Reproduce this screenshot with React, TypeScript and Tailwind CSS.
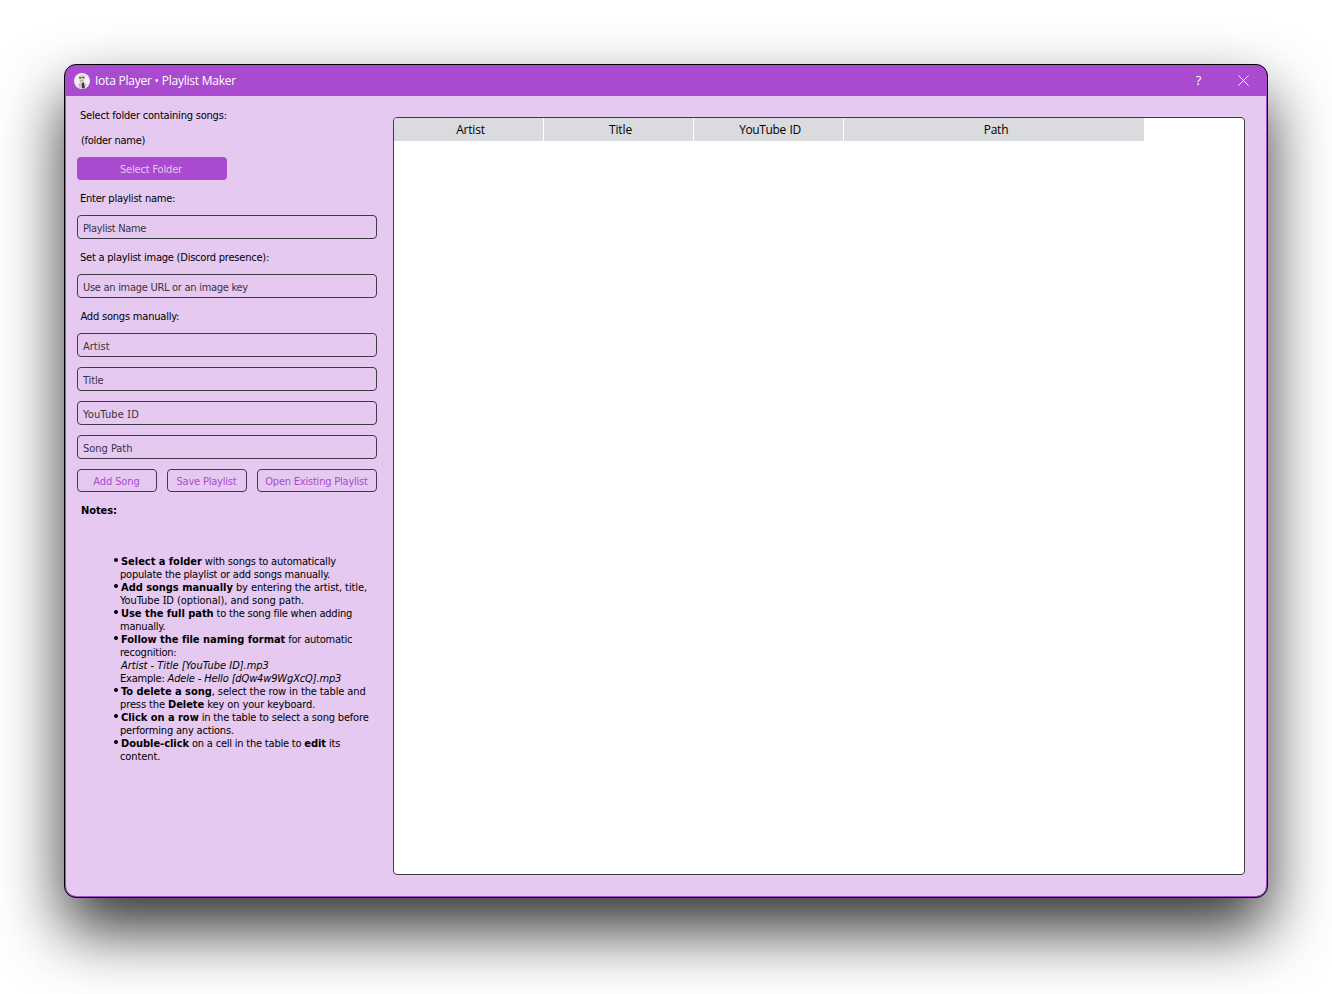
import type { ReactNode } from "react";

const fontUi = "font-['DejaVu_Sans_Condensed','DejaVu_Sans',sans-serif]";

function SerifI() {
  return <span className="font-['Noto_Sans',sans-serif] leading-none">I</span>;
}

function Label({ children, className = "pl-[3px] tracking-[-0.2px]" }: { children: ReactNode; className?: string }) {
  return <div className={`h-[15px] leading-[17px] whitespace-nowrap ${className}`}>{children}</div>;
}

function Field({ children, className = "tracking-[-0.28px]" }: { children: ReactNode; className?: string }) {
  return (
    <div className={`h-6 rounded border border-[#3f3b45] pl-[5px] leading-[25px] whitespace-nowrap text-[#38333d] ${className}`}>
      {children}
    </div>
  );
}

function OutlineButton({ children, className }: { children: ReactNode; className: string }) {
  return (
    <button className={`h-[23px] rounded border border-[#3f3b45] pr-px text-center leading-[23px] whitespace-nowrap text-[#a94acf] ${className}`}>
      {children}
    </button>
  );
}

function B({ children, className = "" }: { children: ReactNode; className?: string }) {
  return <b className={`font-bold tracking-[-0.03px] ${className}`}>{children}</b>;
}

function Note({ children }: { children: ReactNode }) {
  return (
    <li className="flex">
      <span className="mt-[3px] mr-[2px] size-1 shrink-0 rounded-full bg-black" />
      <div className="whitespace-nowrap">{children}</div>
    </li>
  );
}

function Column({ title, className }: { title: string; className: string }) {
  return <div className={`h-full bg-[#dadbde] text-center leading-[23px] ${className}`}>{title}</div>;
}

function Avatar() {
  return (
    <svg className="size-4" viewBox="0 0 16 16">
      <circle cx="8" cy="8" r="8" fill="#f3f0f2" />
      <path d="M4.6 3.6Q7.6.6 11 3L10.8 6H5Z" fill="#cbc5c4" />
      <path d="M5.4 4.6h5v4L8.8 10H6.6L5.4 8.4Z" fill="#ded7d4" />
      <path d="M5.2 4.2h2v1.2h-2zM8.3 4h2v1.2h-2z" fill="#423c40" />
      <path d="M6.4 7.4h2.4v.9H6.4z" fill="#857a78" />
      <path d="M3.6 11.4 6.2 9.6 8 11v4.5L5 14.8Z" fill="#cbc6c5" />
      <path d="M7.6 10.2 10 9.3l1 5.3-2.8 1.2Z" fill="#3d393a" />
      <path d="M10 9.4 12.6 11l-1.4 3.4Z" fill="#d0c8c3" />
    </svg>
  );
}

export default function App() {
  return (
    <div className="h-[994px] w-[1332px] overflow-hidden bg-white pt-16 pl-16">
      <div className={`flex h-[834px] w-[1204px] flex-col overflow-hidden rounded-xl border border-black bg-[#a94acf] text-[11px] text-black shadow-[0_32px_64px_rgba(0,0,0,0.8)] ${fontUi}`}>
        <header className="flex h-[31px] shrink-0 items-center pl-[9px] text-white">
          <Avatar />
          <h1 className="ml-[5px] flex-1 font-['Open_Sans',sans-serif] text-[12px] tracking-[-0.23px]">Iota Player • Playlist Maker</h1>
          <span className="w-[45px] text-center font-['Open_Sans',sans-serif] text-[13px]">?</span>
          <svg className="mr-[18px] ml-[17px] size-[11px]" viewBox="0 0 11 11" fill="none" stroke="#fff" strokeWidth="1">
            <path d="M.5.5l10 10M10.5.5l-10 10" />
          </svg>
        </header>

        <main className="mx-px mb-px flex flex-1 overflow-hidden rounded-b-[10px] bg-[#e5c9f0] pt-[11px] pl-[11px]">
          <section className="flex w-[300px] flex-col gap-2.5">
            <Label>Select folder containing songs:</Label>
            <Label className="pl-1 tracking-[-0.28px]">(folder name)</Label>
            <button className="h-[23px] w-[150px] rounded bg-[#a94acf] pr-0.5 text-center leading-[25px] tracking-[-0.17px] text-[#e5c9f0]">Select Folder</button>
            <Label className="pl-[3px] tracking-[-0.23px]">Enter playlist name:</Label>
            <Field className="tracking-[-0.35px]">Playlist Name</Field>
            <Label className="pl-[3px] tracking-[-0.22px]">Set a playlist image (Discord presence):</Label>
            <Field>Use an image URL or an image key</Field>
            <Label className="pl-[3.5px] tracking-[-0.2px]">Add songs manually:</Label>
            <Field className="tracking-[0.02px]">Artist</Field>
            <Field className="tracking-[-0.15px]">Title</Field>
            <Field className="tracking-[0.15px]">YouTube <SerifI />D</Field>
            <Field className="tracking-[-0.03px]">Song Path</Field>
            <div className="flex gap-2.5">
              <OutlineButton className="w-20 tracking-[-0.1px]">Add Song</OutlineButton>
              <OutlineButton className="w-20 tracking-[-0.2px]">Save Playlist</OutlineButton>
              <OutlineButton className="w-[120px] tracking-[-0.21px]">Open Existing Playlist</OutlineButton>
            </div>
            <Label className="pl-1 font-bold tracking-[-0.1px]">Notes:</Label>

            <ul className="mt-7 pl-[37px] leading-[13px] tracking-[-0.21px]">
              <Note>
                <B className="ml-px">Select a folder</B> with songs to automatically<br />
                populate the playlist or add songs manually.
              </Note>
              <Note>
                <B className="ml-px">Add songs manually</B><span className="tracking-[-0.1px]"> by entering the artist, title,</span><br />
                <span className="tracking-[-0.05px]">YouTube <SerifI />D (optional), and song path.</span>
              </Note>
              <Note>
                <B className="ml-px">Use the full path</B> to the song file when adding<br />
                manually.
              </Note>
              <Note>
                <B className="ml-px">Follow the file naming format</B> for automatic<br />
                recognition:<br />
                <i className="ml-px tracking-[-0.02px]">Artist - Title [YouTube ID].mp3</i><br />
                Example: <i className="tracking-[-0.14px]">Adele - Hello [dQw4w9WgXcQ].mp3</i>
              </Note>
              <Note>
                <B className="ml-px">To delete a song</B><span className="tracking-[-0.12px]">, select the row in the table and</span><br />
                <span className="tracking-[-0.11px]">press the <B>Delete</B> key on your keyboard.</span>
              </Note>
              <Note>
                <B className="ml-px">Click on a row</B><span className="tracking-[-0.18px]"> in the table to select a song before</span><br />
                <span className="tracking-[-0.18px]">performing any actions.</span>
              </Note>
              <Note>
                <B className="ml-px">Double-click</B> on a cell in the table to <B>edit</B> its<br />
                <span className="tracking-[-0.1px]">content.</span>
              </Note>
            </ul>
          </section>

          <section className="mt-2.5 ml-4 h-[758px] w-[852px] overflow-hidden rounded border border-[#3f3b45] bg-white">
            <div className="flex h-[23px] gap-px font-['Open_Sans',sans-serif] text-[12px]">
              <Column title="Artist" className="w-[149px] pl-1 tracking-[-0.2px]" />
              <Column title="Title" className="w-[149px] pl-1 tracking-[-0.1px]" />
              <Column title="YouTube ID" className="w-[149px] pl-[3px] tracking-[-0.4px] [word-spacing:1px]" />
              <Column title="Path" className="w-[300px] pl-1 tracking-[-0.2px]" />
            </div>
          </section>
        </main>
      </div>
    </div>
  );
}
